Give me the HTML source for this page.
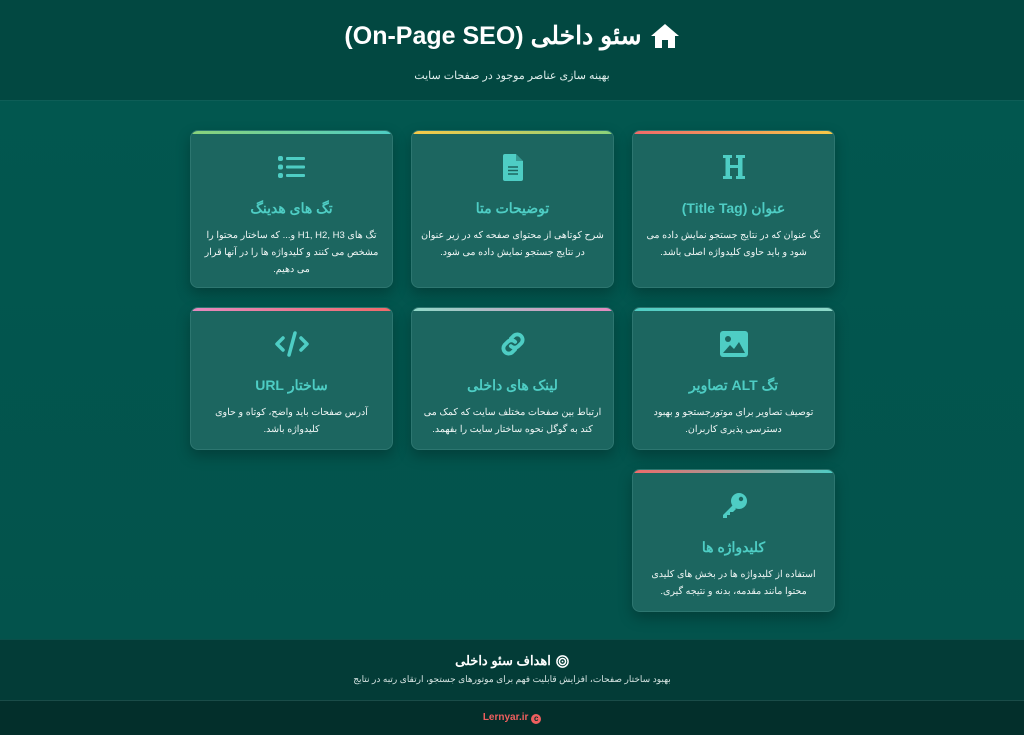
<!DOCTYPE html>
<html lang="fa" dir="rtl"><head><meta charset="utf-8">
<style>
*{box-sizing:border-box;margin:0;padding:0}
body{width:1024px;height:735px;overflow:hidden;font-family:"Liberation Sans","Noto Sans CJK SC",sans-serif;background:#02554e;color:#fff}
header{height:101px;background:#024841;border-bottom:1px solid #0e5e57;text-align:center;padding-top:20px}
header h1{font-size:25px;font-weight:bold;display:flex;justify-content:center;align-items:center;gap:8px;height:32px}
header p{font-size:11px;color:#dfeeec;margin-top:17px}
main{height:538px;background:linear-gradient(180deg,#02574f,#03534c);position:relative}
.grid{position:absolute;top:29px;left:190px;width:645px;display:grid;grid-template-columns:repeat(3,203px);column-gap:18px;row-gap:19px;direction:rtl}
.card{background:#1c6660;border:1px solid #2d7670;border-radius:8px;text-align:center;position:relative;overflow:hidden;box-shadow:0 6px 14px rgba(0,0,0,.25);padding:20px 8px 14px}
.card:before{content:"";position:absolute;top:0;left:0;right:0;height:3px;background:var(--g)}
.card .ic{height:32px;display:flex;justify-content:center;align-items:center;color:#4ecdc4}
.card h3{color:#4ecdc4;font-size:14px;font-weight:bold;margin-top:15px;line-height:20px}
.card p{font-size:9.5px;line-height:17px;margin-top:9px;color:#f1f7f6}
.r1{height:158px}.r2{height:143px}
footer{height:61px;background:#033c37;border-top:1px solid #0a4f49;text-align:center;padding-top:13px}
footer h4{font-size:13px;font-weight:bold;display:flex;justify-content:center;align-items:center;gap:5px}
footer p{font-size:9px;color:#d7e5e3;margin-top:5px}
.bot{height:35px;background:#032f2b;border-top:1px solid #1a4c48;text-align:center;font-size:10px;font-weight:bold;color:#ef5f5f;padding-top:11px;direction:ltr}
</style></head><body>
<header>
<h1><svg width="30" height="26" viewBox="0 0 30 26"><path d="M15 1 L1 13 h4 v12 h7 v-8 h6 v8 h7 V13 h4 Z" fill="#fff"/></svg><span>سئو داخلی (On-Page SEO)</span></h1>
<p>بهینه سازی عناصر موجود در صفحات سایت</p>
</header>
<main><div class="grid">
<div class="card r1" style="--g:linear-gradient(90deg,#f06a6a,#f7c948)"><div class="ic"><svg width="24" height="28" viewBox="0 0 24 28"><path d="M1 2h9v3H8v7h8V5h-2V2h9v3h-2.5v18H23v3h-9v-3h2v-8H8v8h2v3H1v-3h2.5V5H1z" fill="#4ecdc4"/></svg></div><h3>عنوان (Title Tag)</h3><p>تگ عنوان که در نتایج جستجو نمایش داده می شود و باید حاوی کلیدواژه اصلی باشد.</p></div>
<div class="card r1" style="--g:linear-gradient(90deg,#f7c948,#8ad27b)"><div class="ic"><svg width="20" height="27" viewBox="0 0 20 27"><path d="M2 0h11l7 7v18a2 2 0 0 1-2 2H2a2 2 0 0 1-2-2V2a2 2 0 0 1 2-2z" fill="#4ecdc4"/><path d="M13 0v7h7z" fill="#1c6660" opacity=".5"/><path d="M5 13h10M5 16.5h10M5 20h10" stroke="#1c6660" stroke-width="1.6"/></svg></div><h3>توضیحات متا</h3><p>شرح کوتاهی از محتوای صفحه که در زیر عنوان در نتایج جستجو نمایش داده می شود.</p></div>
<div class="card r1" style="--g:linear-gradient(90deg,#8ad27b,#4ecdc4)"><div class="ic"><svg width="27" height="24" viewBox="0 0 27 24"><rect x="0" y="1" width="5" height="5" rx="2" fill="#4ecdc4"/><rect x="0" y="9.5" width="5" height="5" rx="2" fill="#4ecdc4"/><rect x="0" y="18" width="5" height="5" rx="2" fill="#4ecdc4"/><rect x="8" y="2" width="19" height="3" rx="1" fill="#4ecdc4"/><rect x="8" y="10.5" width="19" height="3" rx="1" fill="#4ecdc4"/><rect x="8" y="19" width="19" height="3" rx="1" fill="#4ecdc4"/></svg></div><h3>تگ های هدینگ</h3><p>تگ های H1, H2, H3 و... که ساختار محتوا را مشخص می کنند و کلیدواژه ها را در آنها قرار می دهیم.</p></div>
<div class="card r2" style="--g:linear-gradient(90deg,#4ecdc4,#8fd9c8)"><div class="ic"><svg width="28" height="26" viewBox="0 0 28 26"><rect width="28" height="26" rx="3" fill="#4ecdc4"/><circle cx="8" cy="8" r="3" fill="#1c6660"/><path d="M3 22l7-8 4 4 5-7 6 11z" fill="#1c6660"/></svg></div><h3>تگ ALT تصاویر</h3><p>توصیف تصاویر برای موتورجستجو و بهبود دسترسی پذیری کاربران.</p></div>
<div class="card r2" style="--g:linear-gradient(90deg,#8fd9c8,#e48ac0)"><div class="ic"><svg width="32" height="30" viewBox="0 0 30 28"><g fill="none" stroke="#4ecdc4" stroke-width="3.6" stroke-linecap="round"><path d="M13 9l3-3a5 5 0 0 1 7 7l-3 3a5 5 0 0 1-7 0"/><path d="M17 19l-3 3a5 5 0 0 1-7-7l3-3a5 5 0 0 1 7 0"/></g></svg></div><h3>لینک های داخلی</h3><p>ارتباط بین صفحات مختلف سایت که کمک می کند به گوگل نحوه ساختار سایت را بفهمد.</p></div>
<div class="card r2" style="--g:linear-gradient(90deg,#e48ac0,#f06a6a)"><div class="ic"><svg width="36" height="26" viewBox="0 0 36 26"><g fill="none" stroke="#4ecdc4" stroke-width="3.5" stroke-linecap="round" stroke-linejoin="round"><path d="M9 7l-6 6 6 6M27 7l6 6-6 6M21 2l-6 22"/></g></svg></div><h3>ساختار URL</h3><p>آدرس صفحات باید واضح، کوتاه و حاوی کلیدواژه باشد.</p></div>
<div class="card r2" style="--g:linear-gradient(90deg,#f06a6a,#4ecdc4)"><div class="ic"><svg width="28" height="28" viewBox="0 0 28 28"><circle cx="19" cy="9" r="8" fill="#4ecdc4"/><circle cx="21" cy="7" r="2.2" fill="#1c6660"/><path d="M13 13L3 23v3h4v-3h3v-3h3l3-3z" fill="#4ecdc4"/></svg></div><h3>کلیدواژه ها</h3><p>استفاده از کلیدواژه ها در بخش های کلیدی محتوا مانند مقدمه، بدنه و نتیجه گیری.</p></div>
</div></main>
<footer><h4><svg width="13" height="13" viewBox="0 0 14 14"><circle cx="7" cy="7" r="6" fill="none" stroke="#fff" stroke-width="1.6"/><circle cx="7" cy="7" r="3.3" fill="none" stroke="#fff" stroke-width="1.6"/><circle cx="7" cy="7" r="1" fill="#fff"/></svg><span>اهداف سئو داخلی</span></h4><p>بهبود ساختار صفحات، افزایش قابلیت فهم برای موتورهای جستجو، ارتقای رتبه در نتایج</p></footer>
<div class="bot">Lernyar.ir <span style="display:inline-block;width:10px;height:10px;border-radius:50%;background:#ef5f5f;color:#032f2b;font-size:8px;line-height:10px;vertical-align:-1px">c</span></div>
</body></html>
